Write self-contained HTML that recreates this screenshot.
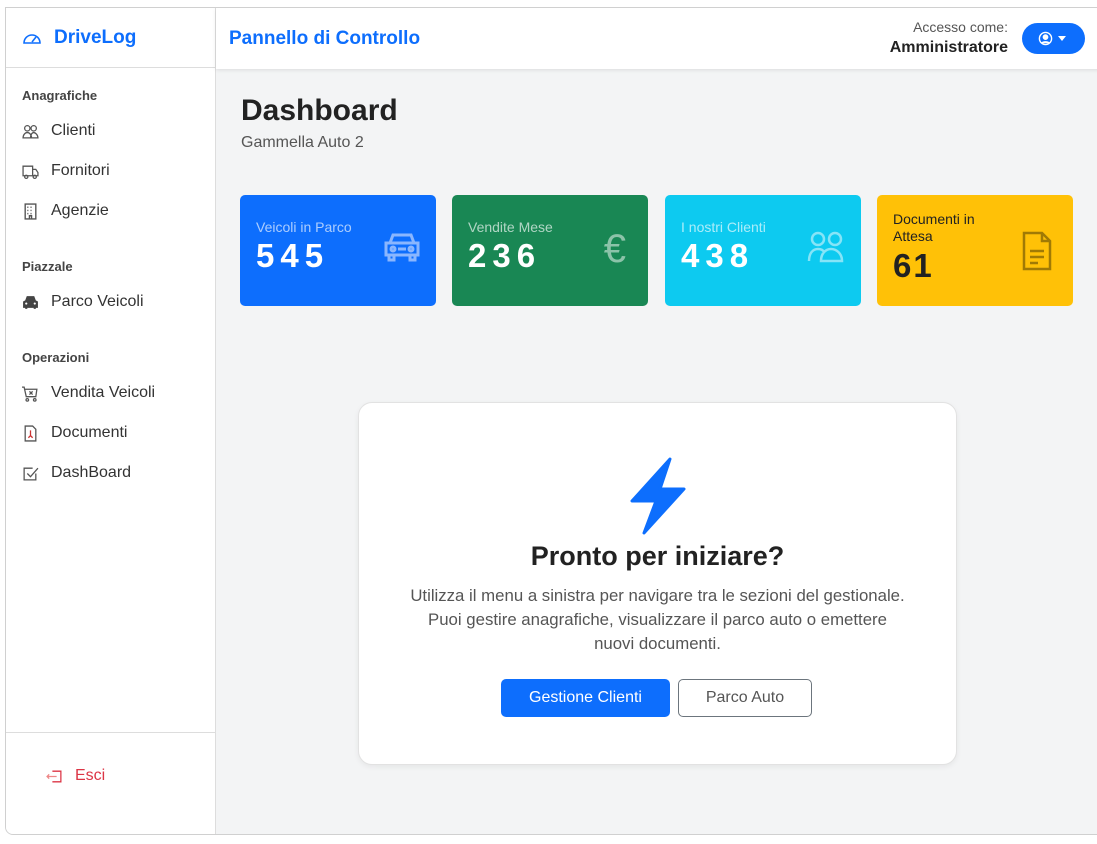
<!DOCTYPE html>
<html><head><meta charset="utf-8"><style>
*{box-sizing:border-box;margin:0;padding:0}
body{width:1097px;height:844px;background:#fff;font-family:"Liberation Sans",sans-serif;position:relative;overflow:hidden}
.frame{position:absolute;left:5px;top:7px;width:1100px;height:828px;border:1px solid #d0d0d0;border-radius:0 0 0 8px;overflow:hidden;background:#f3f4f5}
.side{position:absolute;left:0;top:0;width:210px;height:100%;background:#fff;border-right:1px solid #ddd}
.logo{height:60px;border-bottom:1px solid #ddd;display:flex;align-items:center;padding-left:16px;color:#0d6efd;font-weight:bold;font-size:19px}
.logo svg{margin-right:12px}
.sh{position:absolute;left:16px;font-size:13px;font-weight:bold;color:#444}
.it{position:absolute;left:16px;font-size:16px;color:#333;display:flex;align-items:center}
.it svg{width:17px;height:17px;margin-right:12px}
.hdr{position:absolute;left:210px;top:0;right:0;height:61px;background:#fff;box-shadow:0 1px 4px rgba(0,0,0,.1)}
.card{position:absolute;top:187px;height:111px;width:196px;border-radius:5px;color:#fff;padding:24px 16px}
.card .l{font-size:14px;opacity:.65}
.card .n{font-size:33px;font-weight:bold;letter-spacing:6px;margin-top:2px}
.card svg{position:absolute;right:14px;top:36px}
</style></head><body>
<div class="frame">
<div class="side">
 <div class="logo"><svg width="20" height="16" viewBox="0 0 20 16" fill="none" stroke="#0d6efd" stroke-width="1.6"><path d="M2 13a8 8 0 1 1 16 0H2z"/><path d="M10 12l4-5"/></svg>DriveLog</div>
 <div class="sh" style="top:80px">Anagrafiche</div>
 <div class="it" style="top:114px"><svg viewBox="0 0 16 16" fill="none" stroke="#555" stroke-width="1.2"><circle cx="5" cy="5" r="2.5"/><circle cx="11" cy="5" r="2.5"/><path d="M1 14c0-3 2-5 4-5s4 2 4 5zM8 14c0-3 1.5-5 3-5s4 2 4 5z"/></svg>Clienti</div>
 <div class="it" style="top:154px"><svg viewBox="0 0 16 16" fill="none" stroke="#555" stroke-width="1.2"><path d="M1 3h9v9H1zM10 6h3l2 3v3h-5"/><circle cx="4" cy="13" r="1.5"/><circle cx="12" cy="13" r="1.5"/></svg>Fornitori</div>
 <div class="it" style="top:194px"><svg viewBox="0 0 16 16" fill="none" stroke="#555" stroke-width="1.3"><path d="M3 1h10v14H3z"/><path d="M5 4h1M8 4h1M11 4h0M5 7h1M8 7h1M5 10h1M8 10h1M7 15v-3h2v3"/></svg>Agenzie</div>
 <div class="sh" style="top:251px">Piazzale</div>
 <div class="it" style="top:285px"><svg viewBox="0 0 16 16" fill="#444"><path d="M3 6l1.5-4h7L13 6l2 1v6h-2v1h-2v-1H5v1H3v-1H1V7z"/><circle cx="4" cy="9" r="1" fill="#fff"/><circle cx="12" cy="9" r="1" fill="#fff"/></svg>Parco Veicoli</div>
 <div class="sh" style="top:342px">Operazioni</div>
 <div class="it" style="top:376px"><svg viewBox="0 0 16 16" fill="none" stroke="#555" stroke-width="1.2"><path d="M0 2h2l2 9h9l1-7H3"/><path d="M7 6l3 3M10 6l-3 3"/><circle cx="5" cy="14" r="1.2"/><circle cx="12" cy="14" r="1.2"/></svg>Vendita Veicoli</div>
 <div class="it" style="top:416px"><svg viewBox="0 0 16 16" fill="none" stroke="#555" stroke-width="1.2"><path d="M3 1h7l3 3v11H3z"/><path d="M8 5v5l-2 2M8 10l2 2" stroke="#c33"/></svg>Documenti</div>
 <div class="it" style="top:456px"><svg viewBox="0 0 16 16" fill="none" stroke="#555" stroke-width="1.2"><path d="M13 8v6H2V3h8"/><path d="M5 8l3 3 7-8"/></svg>DashBoard</div>
 <div style="position:absolute;left:0;right:0;top:724px;border-top:1px solid #ddd"></div>
 <div class="it" style="top:759px;left:40px;color:#dc3545"><svg viewBox="0 0 16 16" fill="none" stroke="#dc3545" stroke-width="1.2"><path d="M6 3h8v10H6"/><path d="M10 8H1M3 6L1 8l2 2" stroke="#e88"/></svg>Esci</div>
</div>
<div class="hdr">
 <div style="position:absolute;left:13px;top:20px;color:#0d6efd;font-size:19px;font-weight:bold">Pannello di Controllo</div>
 <div style="position:absolute;right:96px;top:11px;text-align:right;font-size:14px;color:#555">Accesso come:<br><b style="color:#222;font-size:16px;line-height:26px">Amministratore</b></div>
 <div style="position:absolute;left:806px;top:15px;width:63px;height:31px;border-radius:16px;background:#0d6efd"><svg style="position:absolute;left:16px;top:8px" width="15" height="15" viewBox="0 0 16 16" fill="none" stroke="#fff" stroke-width="1.5"><circle cx="8" cy="8" r="6.5"/><circle cx="8" cy="6.5" r="2.3" fill="#fff"/><path d="M4 13c1-2 7-2 8 0" fill="#fff"/></svg><div style="position:absolute;left:36px;top:13px;border:4px solid transparent;border-top:5px solid #fff"></div></div>
</div>
<div style="position:absolute;left:235px;top:86px;font-size:30px;font-weight:bold;color:#222">Dashboard</div>
<div style="position:absolute;left:235px;top:126px;font-size:16px;color:#555">Gammella Auto 2</div>
<div class="card" style="left:234px;background:#0d6efd"><div class="l">Veicoli in Parco</div><div class="n">545</div><svg width="40" height="32" viewBox="0 0 40 32" fill="none" stroke="#8ab6fe" stroke-width="3"><path d="M8 12l3-8h18l3 8M4 12h32v12H4zM7 24v5h5v-5M28 24v5h5v-5"/><circle cx="11" cy="18" r="2"/><circle cx="29" cy="18" r="2"/><path d="M16 18h8"/></svg></div>
<div class="card" style="left:446px;background:#198754"><div class="l">Vendite Mese</div><div class="n">236</div><div style="position:absolute;right:22px;top:32px;font-size:40px;color:#8cc3a9">€</div></div>
<div class="card" style="left:659px;background:#0dcaf0"><div class="l">I nostri Clienti</div><div class="n">438</div><svg width="40" height="32" viewBox="0 0 40 32" fill="none" stroke="#86e4f7" stroke-width="2.5"><circle cx="11" cy="8" r="6"/><circle cx="28" cy="8" r="6"/><path d="M2 30c0-8 4-12 9-12 3 0 5 1 6 3M14 30c0-8 5-12 10-12s11 4 11 12z"/></svg></div>
<div class="card" style="left:871px;background:#ffc107;color:#222;padding-top:16px"><div class="l" style="opacity:1;font-size:14px;line-height:17px">Documenti in<br>Attesa</div><div class="n" style="letter-spacing:2px">61</div><svg width="32" height="40" viewBox="0 0 32 40" fill="none" stroke="#a07a05" stroke-width="2.5" style="top:36px;right:20px"><path d="M3 2h18l8 8v28H3z"/><path d="M21 2v8h8M9 20h14M9 26h14M9 32h8"/></svg></div>
<div style="position:absolute;left:352px;top:394px;width:599px;height:363px;background:#fff;border:1px solid #e2e2e2;border-radius:14px;box-shadow:0 2px 6px rgba(0,0,0,.06);text-align:center">
 <svg style="position:absolute;left:271px;top:54px" width="56" height="78" viewBox="0 0 56 78"><path d="M40 2L2 44h24L14 76 54 32H30z" fill="#0d6efd" stroke="#0d6efd" stroke-width="3" stroke-linejoin="round"/></svg>
 <div style="position:absolute;left:0;right:0;top:138px;font-size:27px;font-weight:bold;color:#222">Pronto per iniziare?</div>
 <div style="position:absolute;left:20px;right:20px;top:181px;font-size:16.8px;line-height:24px;color:#555">Utilizza il menu a sinistra per navigare tra le sezioni del gestionale.<br>Puoi gestire anagrafiche, visualizzare il parco auto o emettere<br>nuovi documenti.</div>
 <div style="position:absolute;left:142px;top:276px;width:169px;height:38px;background:#0d6efd;border-radius:5px;color:#fff;font-size:16px;line-height:38px">Gestione Clienti</div>
 <div style="position:absolute;left:319px;top:276px;width:134px;height:38px;border:1px solid #6c757d;border-radius:5px;color:#555;font-size:16px;line-height:36px">Parco Auto</div>
</div>
</div>
</body></html>
